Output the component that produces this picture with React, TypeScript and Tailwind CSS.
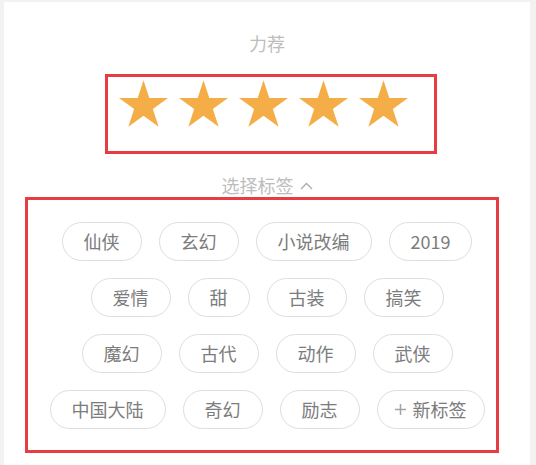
import React from "react";

const rows = [
  ["仙侠", "玄幻", "小说改编", "2019"],
  ["爱情", "甜", "古装", "搞笑"],
  ["魔幻", "古代", "动作", "武侠"],
  ["中国大陆", "奇幻", "励志"],
];

function Star() {
  return (
    <svg width="49" height="47" viewBox="2.45 0 95.1 90.45" className="block">
      <polygon
        fill="#f5ad47"
        points="50,0 61.23,34.55 97.55,34.55 68.16,55.9 79.39,90.45 50,69.1 20.61,90.45 31.84,55.9 2.45,34.55 38.77,34.55"
      />
    </svg>
  );
}

function Tag({ label }: { label: string }) {
  return (
    <div className="h-[39px] px-[21px] flex items-center border border-[#dedede] rounded-full text-[18px] text-[#7c7c7c] bg-white">
      {label}
    </div>
  );
}

export default function App() {
  return (
    <div
      className="min-h-[465px] bg-[#f2f2f2] pt-[2px] pl-[4px] pr-[6px]"
      style={{ fontFamily: '"Noto Sans CJK SC", "Noto Sans", sans-serif' }}
    >
      <div className="bg-white min-h-[463px] pt-[29px] pb-4">
        {/* 标题 */}
        <div className="text-center text-[18px] leading-[24px] text-[#bdbdbd]">力荐</div>

        {/* 星级 */}
        <div className="mt-[19px] ml-[101px] w-[332px] h-[80px] border-[3px] border-[#e63c42] pt-[3px] pl-[11px] flex gap-[11px]">
          <Star />
          <Star />
          <Star />
          <Star />
          <Star />
        </div>

        {/* 选择标签 */}
        <div className="mt-[19px] flex items-center justify-center gap-[6px] text-[18px] leading-[24px] text-[#bdbdbd]">
          <span>选择标签</span>
          <svg width="13" height="8" viewBox="0 0 13 8" className="mt-[1px]">
            <polyline points="1,7 6.5,1.5 12,7" fill="none" stroke="#ababab" strokeWidth="1.3" />
          </svg>
        </div>

        {/* 标签 */}
        <div className="ml-[21px] w-[474px] border-[3px] border-[#e63c42] pt-[22px] pb-[21px] pl-[13px] pr-[3px] flex flex-col gap-[17px]">
          {rows.map((row, i) => (
            <div key={i} className="flex justify-center gap-[17px]">
              {row.map((t) => (
                <Tag key={t} label={t} />
              ))}
              {i === rows.length - 1 && (
                <div className="h-[39px] px-[17px] flex items-center gap-[7px] border border-[#dedede] rounded-full text-[18px] text-[#7c7c7c]">
                  <svg width="11" height="11" viewBox="0 0 11 11" className="block">
                    <path d="M5.5 0V11M0 5.5H11" stroke="#a3a3a3" strokeWidth="1.5" />
                  </svg>
                  <span>新标签</span>
                </div>
              )}
            </div>
          ))}
        </div>
      </div>
    </div>
  );
}
